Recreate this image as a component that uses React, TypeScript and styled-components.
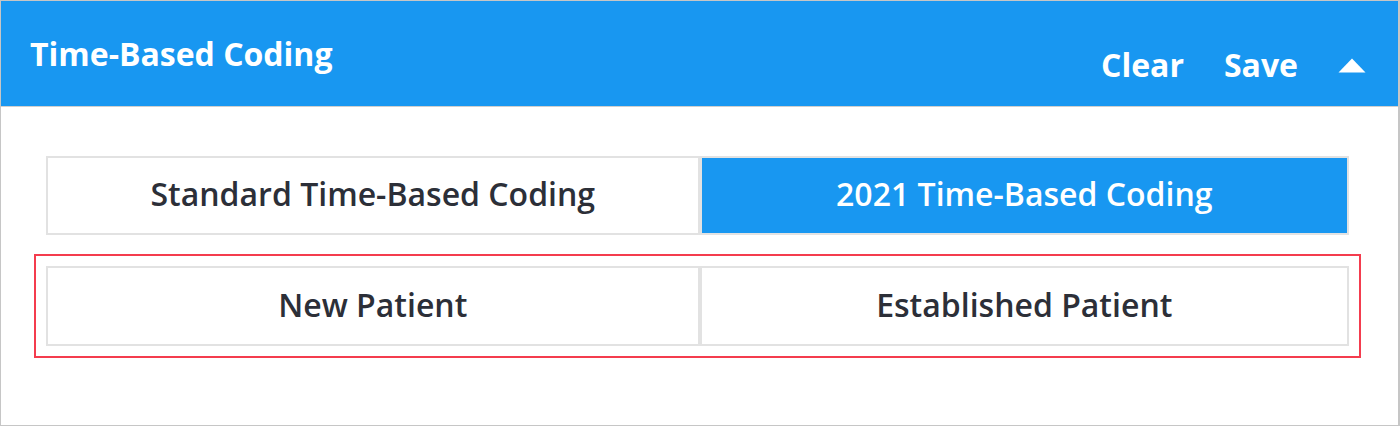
import React, { useState } from "react";
import styled, { createGlobalStyle } from "styled-components";

const Global = createGlobalStyle`
  html, body { margin: 0; padding: 0; background: #fff; }
  body { font-family: "Open Sans", "Noto Sans", sans-serif; }
  * { box-sizing: border-box; }
`;

const Panel = styled.div`
  width: 1400px;
  height: 426px;
  border: 1px solid #c6c6c6;
  border-right-width: 2px;
  display: flex;
  flex-direction: column;
  background: #fff;
`;

const Header = styled.div`
  height: 106px;
  background: #1897f1;
  border-bottom: 1px solid #cfcfcf;
  display: flex;
  align-items: flex-start;
  justify-content: space-between;
  padding: 0 32px 0 29px;
  color: #fff;
`;

const Title = styled.h2`
  margin: 30px 0 0;
  font-size: 32px;
  font-weight: 700;
  line-height: 46px;
`;

const Actions = styled.div`
  display: flex;
  align-items: center;
  gap: 40px;
  margin-top: 41px;
`;

const ActionButton = styled.button`
  background: none;
  border: none;
  padding: 0;
  color: #fff;
  font-family: inherit;
  font-size: 32px;
  font-weight: 700;
  line-height: 46px;
  cursor: pointer;
`;

const Caret = styled.button`
  background: none;
  border: none;
  padding: 0;
  width: 28px;
  height: 46px;
  display: flex;
  align-items: center;
  cursor: pointer;
`;

const Content = styled.div`
  padding: 49px 37px 0 33px;
  display: flex;
  flex-direction: column;
`;

const TabRow = styled.div<{ $inset?: boolean }>`
  display: grid;
  grid-template-columns: 1fr 1fr;
  border: 2px solid #e2e2e2;
  height: ${(p) => (p.$inset ? 80 : 79)}px;
  margin: 0 12px;
`;

const Tab = styled.button<{ $active?: boolean }>`
  border: none;
  margin: 0;
  padding: 0 0 4px;
  font-family: inherit;
  font-size: 32px;
  font-weight: 600;
  background: ${(p) => (p.$active ? "#1897f1" : "#fff")};
  color: ${(p) => (p.$active ? "#fff" : "#2c2f38")};
  cursor: pointer;
  & + & {
    border-left: 4px solid #e2e2e2;
  }
`;

const Highlight = styled.div`
  margin-top: 19px;
  border: 2px solid #f43c4e;
  padding: 10px 10px;
  height: 104px;
  & > div {
    margin: 0;
  }
`;

export default function App() {
  const [mode, setMode] = useState(1);
  const [patient, setPatient] = useState(-1);
  return (
    <>
      <Global />
      <Panel>
        <Header>
          <Title>Time-Based Coding</Title>
          <Actions>
            <ActionButton>Clear</ActionButton>
            <ActionButton>Save</ActionButton>
            <Caret aria-label="Collapse">
              <svg width="28" height="15" viewBox="0 0 28 15">
                <path d="M14 0.5 L27.5 14.5 L0.5 14.5 Z" fill="#fff" />
              </svg>
            </Caret>
          </Actions>
        </Header>
        <Content>
          <TabRow>
            <Tab $active={mode === 0} onClick={() => setMode(0)}>
              Standard Time-Based Coding
            </Tab>
            <Tab $active={mode === 1} onClick={() => setMode(1)}>
              2021 Time-Based Coding
            </Tab>
          </TabRow>
          <Highlight>
            <TabRow $inset>
              <Tab $active={patient === 0} onClick={() => setPatient(0)}>
                New Patient
              </Tab>
              <Tab $active={patient === 1} onClick={() => setPatient(1)}>
                Established Patient
              </Tab>
            </TabRow>
          </Highlight>
        </Content>
      </Panel>
    </>
  );
}
